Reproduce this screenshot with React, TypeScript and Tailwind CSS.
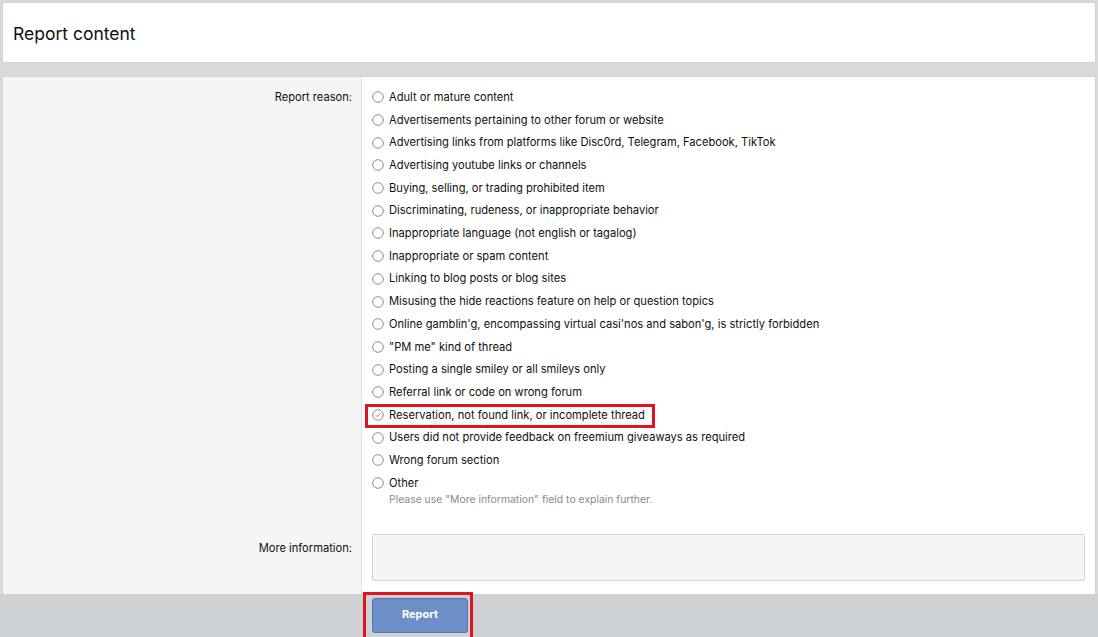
import type { FC } from "react";

const reasons = [
  "Adult or mature content",
  "Advertisements pertaining to other forum or website",
  "Advertising links from platforms like Disc0rd, Telegram, Facebook, TikTok",
  "Advertising youtube links or channels",
  "Buying, selling, or trading prohibited item",
  "Discriminating, rudeness, or inappropriate behavior",
  "Inappropriate language (not english or tagalog)",
  "Inappropriate or spam content",
  "Linking to blog posts or blog sites",
  "Misusing the hide reactions feature on help or question topics",
  "Online gamblin'g, encompassing virtual casi'nos and sabon'g, is strictly forbidden",
  "\"PM me\" kind of thread",
  "Posting a single smiley or all smileys only",
  "Referral link or code on wrong forum",
  "Reservation, not found link, or incomplete thread",
  "Users did not provide feedback on freemium giveaways as required",
  "Wrong forum section",
  "Other",
];

const selectedIndex = 14;

const Radio: FC<{ checked: boolean }> = ({ checked }) => (
  <svg width="12" height="12" viewBox="0 0 12 12" className="shrink-0">
    <circle cx="6" cy="6" r="5.3" fill="#fff" stroke="#8c8c9c" strokeWidth="1" />
    {checked && (
      <path d="M3.6 6.1 L5.3 7.7 L8.4 4.4" fill="none" stroke="#8c8c9c" strokeWidth="1" />
    )}
  </svg>
);

const App: FC = () => {
  return (
    <div
      className="h-[637px] w-full overflow-hidden bg-[#d9d9d9] pt-[2px] text-[11.15px] text-[#0f0f0f]"
      style={{ fontFamily: "Inter, 'Noto Sans', sans-serif" }}
    >
      <div className="mx-[2px] flex h-[61px] items-center rounded-[2px] border border-[#d3d3d3] bg-white pl-[10px] pt-[3px]">
        <h1 className="text-[17.5px] font-normal">Report content</h1>
      </div>

      <div className="mx-[2px] mt-[13px] flex border border-b-0 border-[#d3d3d3] bg-white">
        <div className="flex w-[359px] shrink-0 flex-col border-r border-[#e3e3e3] bg-[#f5f5f5] pr-[9px] text-right">
          <div className="mt-[9px] flex h-[22.7px] items-center justify-end">Report reason:</div>
          <div className="flex-1" />
          <div className="mb-[35px] flex h-[22px] items-center justify-end">More information:</div>
        </div>

        <div className="flex-1 pl-[10px] pr-[10px] pt-[9px] pb-[13px]">
          {reasons.map((r, i) => (
            <div key={r} className="relative flex h-[22.7px] items-center gap-[5px]">
              {i === selectedIndex && (
                <div className="absolute -left-[7px] top-0 h-[24px] w-[290px] border-[3px] border-[#e0141e]" />
              )}
              <Radio checked={i === selectedIndex} />
              <span className="relative">{r}</span>
            </div>
          ))}
          <div className="pl-[17px] text-[10.4px] leading-[12px] text-[#8a8a8a]">
            Please use "More information" field to explain further.
          </div>
          <div className="mt-[28px] h-[47px] rounded-[2px] border border-[#d2d2d2] bg-[#f5f5f5]" />
        </div>
      </div>

      <div className="flex h-[48px] bg-[#cfd2d5] pl-[363px]">
        <div className="relative -mt-[2px] h-[48px] w-[110px] border-[3px] border-[#e0141e] bg-[#cfd2d5] pl-[6px] pt-[3px]">
          <button className="flex h-[35px] w-[96px] items-center justify-center rounded-[3px] border border-[#5577aa] bg-[#6b8fc6] pb-[3px] text-[11px] font-bold text-white">
            Report
          </button>
        </div>
      </div>
    </div>
  );
};

export default App;
